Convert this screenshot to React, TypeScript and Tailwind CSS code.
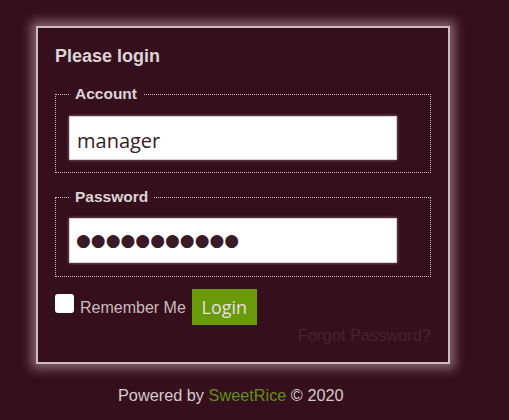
export default function App() {
  return (
    <div className="min-h-[420px] w-full bg-[#350f1c] pt-[26px] font-['Liberation_Sans',Arial,sans-serif]">
      <div className="ml-[36px] w-[414px] h-[338px] border-2 border-[#cdbcc1] bg-[#350f1c] px-[17px] pt-[16px] shadow-[0_0_10px_5px_rgba(205,165,178,0.55)]">
        <h1 className="text-[18px] leading-[24px] font-bold text-[#ddd3d6]">Please login</h1>

        <fieldset className="mt-[16px] border border-dotted border-[#c9bcc0] px-[13px] pb-[12px] pt-[12px]">
          <legend className="px-[6px] text-[15.5px] leading-[20px] font-bold text-[#ddd3d6]">Account</legend>
          <input
            readOnly
            defaultValue="manager"
            className="block w-[328px] h-[44px] bg-white border border-[#d9d2d4] shadow-[0_0_3px_rgba(200,170,180,0.6)] px-[7px] pt-[4px] text-[20px] text-[#3b1a27] font-['Open_Sans',sans-serif] outline-none"
          />
        </fieldset>

        <fieldset className="mt-[14px] border border-dotted border-[#c9bcc0] px-[13px] pb-[13px] pt-[11px]">
          <legend className="px-[6px] text-[15.5px] leading-[20px] font-bold text-[#ddd3d6]">Password</legend>
          <div className="flex items-center w-[328px] h-[45px] bg-white border border-[#d9d2d4] shadow-[0_0_3px_rgba(200,170,180,0.6)] px-[6px] text-[17px] text-[#3b1a27] font-['DejaVu_Sans',sans-serif]">
            ●●●●●●●●●●●
          </div>
        </fieldset>

        <div className="mt-[12px] flex items-start">
          <input
            type="checkbox"
            className="appearance-none w-[19px] h-[19px] rounded-[3px] bg-white mt-[5px]"
          />
          <span className="ml-[6px] mt-[10px] text-[16px] leading-[18px] text-[#c9bcc0]">Remember Me</span>
          <button className="ml-[6px] w-[65px] h-[36px] bg-[#689a0a] text-[18px] text-[#eadfe3] font-['Open_Sans',sans-serif]">
            Login
          </button>
        </div>

        <div className="mt-[1px] text-right text-[16.4px] leading-[18px] text-[#47232f]">Forgot Password?</div>
      </div>

      <div className="mt-[19px] ml-[118px] text-[16.3px] text-[#d6cbce]">
        Powered by <span className="text-[#5f8f1a]">SweetRice</span> © 2020
      </div>
    </div>
  );
}
